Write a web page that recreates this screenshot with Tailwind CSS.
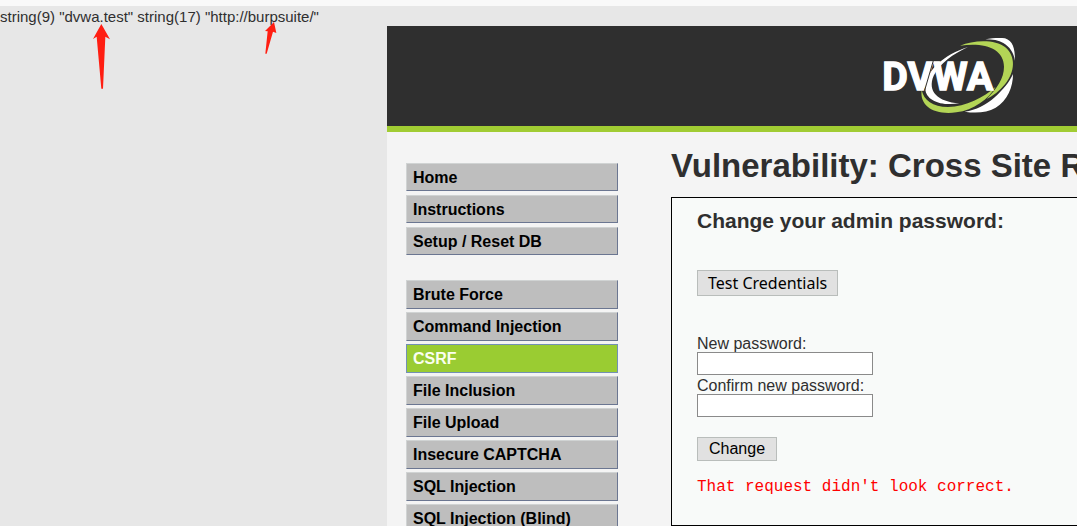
<!DOCTYPE html>
<html lang="en">
<head>
<meta charset="utf-8">
<title>Vulnerability: Cross Site Request Forgery</title>
<script src="https://cdn.jsdelivr.net/npm/@tailwindcss/browser@4"></script>
</head>
<body class="relative h-screen overflow-hidden border-t-6 border-[#f9f9f9] bg-[#e7e7e7] font-['Liberation_Sans',Arial,sans-serif] text-base text-[#2f2f2f]">
  <p class="h-5 text-[15px] leading-[22px]">string(9) "dvwa.test" string(17) "http://burpsuite/"</p>

  <svg class="absolute top-4 left-20 h-20 w-56 fill-[#ff1e12]" viewBox="0 0 672 240" aria-hidden="true">
    <path d="M64 6 90 52 76 44 69 200H64L50 44 39 51Z"/>
    <path d="M582 0 589 33 579 29 560 95H556L563 28 555 27Z"/>
  </svg>

  <div class="ml-[387px] min-h-full bg-[#f4f4f4]">
    <header class="flex h-[106px] items-start justify-end border-b-6 border-[#a1cc33] bg-[#2f2f2f] pt-1 pr-[57px]">
      <svg class="h-[90px] w-[140px]" viewBox="0 0 420 270" role="img" aria-label="DVWA">
        <g fill="#fff">
          <path d="M316 28C340 23 362 23 375 25C398 33 405 53 405 92C401 68 389 50 370 39C356 31 338 28 316 28Z"/>
          <path d="M399 132C399 171 383 211 347 233C321 247 291 251 254 245C289 240 317 226 345 201C370 178 388 157 399 132Z"/>
          <path d="M264 51C219 72 180 99 161 137C141 184 173 215 238 220C183 229 137 211 136 176C134 123 194 73 264 51Z"/>
        </g>
        <g fill="#b3d556">
          <path d="M240 47C282 29 347 28 375 51C409 79 405 126 375 163C358 184 340 198 320 207C351 175 372 145 372 110C372 55 312 36 240 47Z"/>
          <path d="M125 180C131 210 158 231 204 231C258 230 311 202 347 170C326 207 281 240 229 247C164 256 118 229 125 180Z"/>
        </g>
        <text x="7" y="179" class="fill-white stroke-white font-['Roboto',sans-serif] text-[118px] font-bold" stroke-width="4">DVWA</text>
        <path d="M160 92 134 181" stroke="#2f2f2f" stroke-width="3"/>
      </svg>
    </header>

    <div class="flex">
      <nav class="ml-[19px] w-[212px] shrink-0 pt-[31px] font-bold text-black" aria-label="Main menu">
        <ul class="flex flex-col gap-1">
          <li><a href="#" class="block h-7 border border-t-[#d0d3d3] border-r-[#6b7691] border-b-[#6b7691] border-l-[#d0d3d3] bg-[#bebebe] px-1.5 leading-7">Home</a></li>
          <li><a href="#" class="block h-7 border border-t-[#d0d3d3] border-r-[#6b7691] border-b-[#6b7691] border-l-[#d0d3d3] bg-[#bebebe] px-1.5 leading-7">Instructions</a></li>
          <li><a href="#" class="block h-7 border border-t-[#d0d3d3] border-r-[#6b7691] border-b-[#6b7691] border-l-[#d0d3d3] bg-[#bebebe] px-1.5 leading-7">Setup / Reset DB</a></li>
        </ul>
        <ul class="mt-[25px] flex flex-col gap-[3px]">
          <li><a href="#" class="block h-[29px] border border-t-[#d0d3d3] border-r-[#6b7691] border-b-[#6b7691] border-l-[#d0d3d3] bg-[#bebebe] px-1.5 leading-7">Brute Force</a></li>
          <li><a href="#" class="block h-[29px] border border-t-[#d0d3d3] border-r-[#6b7691] border-b-[#6b7691] border-l-[#d0d3d3] bg-[#bebebe] px-1.5 leading-7">Command Injection</a></li>
          <li><a href="#" aria-current="page" class="block h-[29px] border border-[#7390b4] bg-[#9acc32] px-1.5 leading-7 text-[#fbfff0]">CSRF</a></li>
          <li><a href="#" class="block h-[29px] border border-t-[#d0d3d3] border-r-[#6b7691] border-b-[#6b7691] border-l-[#d0d3d3] bg-[#bebebe] px-1.5 leading-7">File Inclusion</a></li>
          <li><a href="#" class="block h-[29px] border border-t-[#d0d3d3] border-r-[#6b7691] border-b-[#6b7691] border-l-[#d0d3d3] bg-[#bebebe] px-1.5 leading-7">File Upload</a></li>
          <li><a href="#" class="block h-[29px] border border-t-[#d0d3d3] border-r-[#6b7691] border-b-[#6b7691] border-l-[#d0d3d3] bg-[#bebebe] px-1.5 leading-7">Insecure CAPTCHA</a></li>
          <li><a href="#" class="block h-[29px] border border-t-[#d0d3d3] border-r-[#6b7691] border-b-[#6b7691] border-l-[#d0d3d3] bg-[#bebebe] px-1.5 leading-7">SQL Injection</a></li>
          <li><a href="#" class="block h-[29px] border border-t-[#d0d3d3] border-r-[#6b7691] border-b-[#6b7691] border-l-[#d0d3d3] bg-[#bebebe] px-1.5 leading-7">SQL Injection (Blind)</a></li>
        </ul>
      </nav>

      <main class="ml-[53px] min-w-0 flex-1 pt-[13px]">
        <h1 class="mb-[11px] text-[33px] leading-[41px] font-bold whitespace-nowrap">Vulnerability: Cross Site R</h1>
        <section class="border border-r-0 border-black bg-[#f8faf9] px-[25px] pt-[9px] pb-7">
          <h2 class="text-[21px] leading-7 font-bold">Change your admin password:</h2>
          <button type="button" class="mt-[35px] block h-[26px] border border-[#b9bdbb] bg-[#e1e1e1] px-2.5 font-['Noto_Sans',sans-serif] text-base leading-6 text-black">Test Credentials</button>
          <form class="mt-[39px] flex flex-col items-start">
            <label for="new-password" class="h-[17px] leading-[18px]">New password:</label>
            <input id="new-password" type="password" class="h-[23px] w-44 border border-[#8a8a8a] bg-white px-1">
            <label for="confirm-password" class="mt-0.5 h-[17px] leading-[18px]">Confirm new password:</label>
            <input id="confirm-password" type="password" class="h-[23px] w-44 border border-[#8a8a8a] bg-white px-1">
            <button type="button" class="mt-5 h-6 border border-[#b9bdbb] bg-[#e1e1e1] px-[11px] leading-[22px] text-black">Change</button>
          </form>
          <p class="mt-4 font-['Liberation_Mono',monospace] leading-5 text-[#ff0000]">That request didn't look correct.</p>
        </section>
      </main>
    </div>
  </div>
</body>
</html>
